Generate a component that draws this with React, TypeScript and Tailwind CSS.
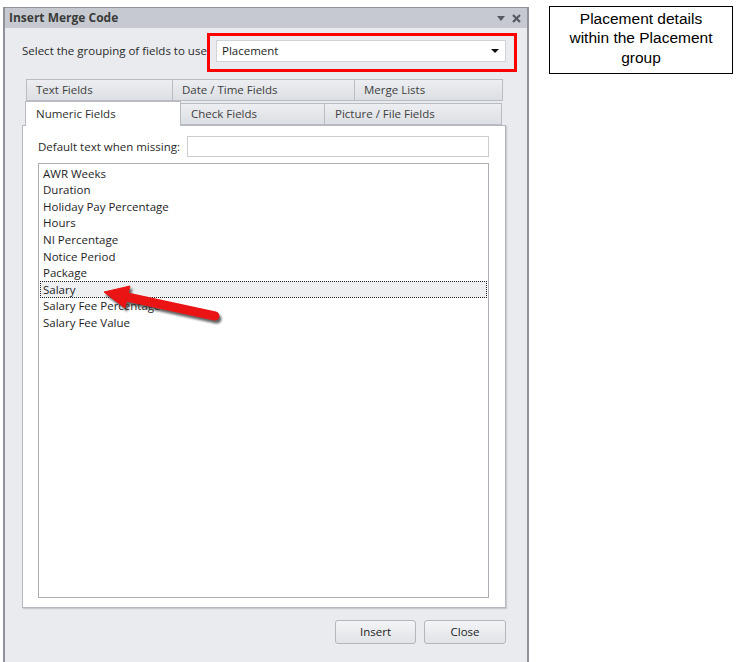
import React from "react";

const fields = [
  "AWR Weeks",
  "Duration",
  "Holiday Pay Percentage",
  "Hours",
  "NI Percentage",
  "Notice Period",
  "Package",
  "Salary",
  "Salary Fee Percentage",
  "Salary Fee Value",
];

const backTabs = [
  { label: "Text Fields", width: "w-[146px]" },
  { label: "Date / Time Fields", width: "w-[182px]" },
  { label: "Merge Lists", width: "w-[149px]" },
];

const RedArrow = () => (
  <svg
    className="pointer-events-none absolute left-[96px] top-[278px]"
    width="130"
    height="50"
    viewBox="0 0 130 50"
  >
    <defs>
      <filter id="arrow-shadow" x="-20%" y="-40%" width="140%" height="180%">
        <feGaussianBlur stdDeviation="1.2" />
      </filter>
    </defs>
    <g transform="translate(2 3)" fill="#303030" stroke="#303030" opacity="0.75" filter="url(#arrow-shadow)">
      <line x1="31" y1="19" x2="119" y2="38" strokeWidth="9" strokeLinecap="round" />
      <polygon points="8,14 29,30 34,8" strokeWidth="1" />
    </g>
    <g>
      <line x1="31" y1="19" x2="119" y2="38" strokeWidth="9" strokeLinecap="round" stroke="#ea1414" />
      <polygon points="8,14 29,30 34,8" strokeWidth="1" fill="#ea1414" stroke="#ea1414" />
    </g>
  </svg>
);

export default function App() {
  return (
    <div className="relative h-[662px] w-[738px] overflow-hidden bg-white font-['Open_Sans','Noto_Sans',sans-serif] text-[11.5px] text-[#1e1e1e]">
      <div className="flex items-start">
        {/* dialog */}
        <div className="ml-[3px] mt-[7px] flex h-[655px] w-[526px] flex-col border-x-2 border-t border-[#8f9399] bg-[#e9ebee]">
          <div className="flex h-[20px] items-center justify-between bg-[#c6cad0] pl-[4px] pr-[6px]">
            <span className="text-[12px] font-bold text-[#3a3a3a]">Insert Merge Code</span>
            <div className="flex items-center gap-[7px] text-[#555a60]">
              <svg width="8" height="5" viewBox="0 0 8 5">
                <polygon points="0,0 8,0 4,5" fill="currentColor" />
              </svg>
              <svg width="9" height="9" viewBox="0 0 9 9">
                <path d="M1 1 L8 8 M8 1 L1 8" stroke="currentColor" strokeWidth="2.2" />
              </svg>
            </div>
          </div>

          <div className="flex flex-1 flex-col pl-[17px] pr-[21px]">
            {/* grouping row */}
            <div className="relative mt-[12px] flex items-center">
              <span className="w-[194px] text-[#2a2a2a]">Select the grouping of fields to use:</span>
              <div className="flex h-[22px] w-[290px] items-center justify-between border border-[#d0d3d8] bg-white pl-[5px] pr-[6px]">
                <span>Placement</span>
                <svg width="8" height="4" viewBox="0 0 8 4">
                  <polygon points="0,0 8,0 4,4" fill="#111" />
                </svg>
              </div>
              <div className="pointer-events-none absolute left-[185px] top-[-7px] h-[39px] w-[310px] border-[3px] border-[#ff0000]" />
            </div>

            {/* tabs */}
            <div className="mt-[17px] flex pl-[4px]">
              {backTabs.map((t) => (
                <div
                  key={t.label}
                  className={`${t.width} flex h-[22px] items-center border border-r-0 border-[#b9bcc2] bg-gradient-to-b from-[#eceef1] to-[#dcdfe3] pl-[9px] text-[#3e3e3e] last:border-r`}
                >
                  {t.label}
                </div>
              ))}
            </div>
            <div className="flex h-[24px] items-end pl-[3px]">
              <div className="relative z-10 -mb-px flex h-[25px] w-[156px] items-center border border-b-0 border-[#b9bcc2] bg-white pl-[10px] text-[#2e2e2e]">
                Numeric Fields
              </div>
              <div className="flex h-[22px] w-[144px] items-center border border-l-0 border-[#b9bcc2] bg-gradient-to-b from-[#eceef1] to-[#dcdfe3] pl-[10px] text-[#3e3e3e]">
                Check Fields
              </div>
              <div className="flex h-[22px] w-[177px] items-center border border-l-0 border-[#b9bcc2] bg-gradient-to-b from-[#eceef1] to-[#dcdfe3] pl-[10px] text-[#3e3e3e]">
                Picture / File Fields
              </div>
            </div>

            {/* tab panel */}
            <div className="flex h-[483px] flex-col border border-[#b5b9bf] bg-white pb-[9px] pl-[15px] pr-[16px] pt-[10px] shadow-[1px_1px_1px_#c8cbd0]">
              <div className="flex items-center">
                <span className="w-[149px] text-[#2a2a2a]">Default text when missing:</span>
                <div className="h-[21px] flex-1 border border-[#c9ccd1] bg-white" />
              </div>
              <div className="mt-[6px] flex-1 border border-[#abaeb4] bg-white px-px pt-px">
                {fields.map((f) => (
                  <div
                    key={f}
                    className={`flex h-[16.6px] items-center border pl-[2px] leading-none ${
                      f === "Salary"
                        ? "border-dotted border-[#222] bg-[#eeeff1]"
                        : "border-transparent"
                    }`}
                  >
                    {f}
                  </div>
                ))}
              </div>
            </div>

            {/* buttons */}
            <div className="mt-[12px] flex justify-end gap-[8px]">
              <button className="h-[24px] w-[81px] rounded-[3px] border border-[#b3b7bd] bg-gradient-to-b from-[#f3f4f6] to-[#e0e3e7] text-[#222]">
                Insert
              </button>
              <button className="h-[24px] w-[82px] rounded-[3px] border border-[#b3b7bd] bg-gradient-to-b from-[#f3f4f6] to-[#e0e3e7] text-[#222]">
                Close
              </button>
            </div>
          </div>
        </div>

        {/* callout */}
        <div className="ml-[20px] mt-[6px] flex h-[68px] w-[184px] items-center justify-center border border-black px-[14px] pb-[4px] text-center font-['Liberation_Sans',sans-serif] text-[15.5px] leading-[19.5px] text-black">
          Placement details within the Placement group
        </div>
      </div>

      <RedArrow />
    </div>
  );
}
